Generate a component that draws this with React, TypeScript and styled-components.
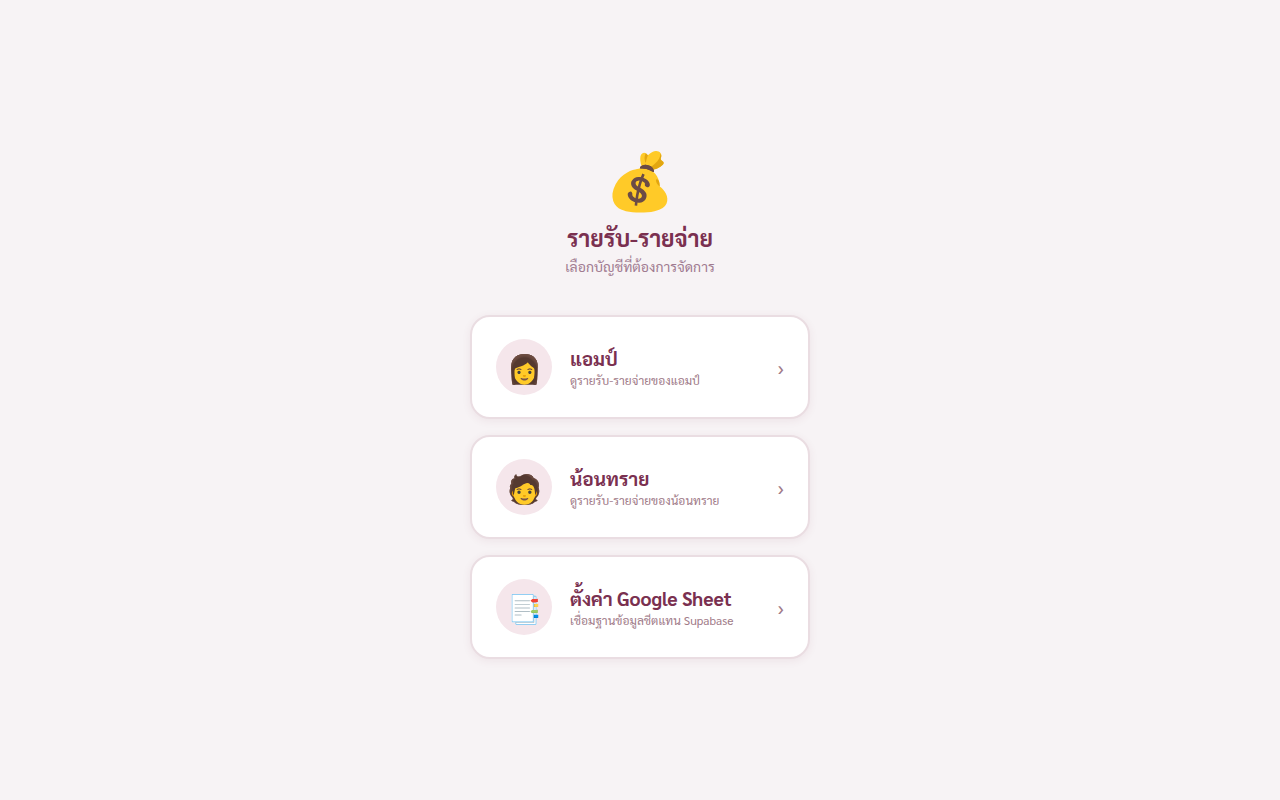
import React from 'react';
import styled, { createGlobalStyle } from 'styled-components';

const GlobalStyle = createGlobalStyle`
  * { box-sizing: border-box; }
  body { margin: 0; background: #f7f3f5; font-family: 'Sarabun', 'Noto Sans Thai', 'Noto Sans', sans-serif; }
`;

const Page = styled.main`
  min-height: 100vh;
  display: flex;
  flex-direction: column;
  align-items: center;
  justify-content: center;
  padding: 24px;
`;

const Header = styled.header`
  text-align: center;
  margin-bottom: 39px;
`;

const Logo = styled.div`
  font-size: 56px;
  line-height: 74px;
  margin-bottom: 6px;
`;

const Title = styled.h1`
  margin: 0;
  font-size: 23px;
  line-height: 32px;
  font-weight: 700;
  color: #7a3050;
`;

const Subtitle = styled.p`
  margin: 3px 0 0;
  font-size: 14px;
  line-height: 20px;
  color: #a07a90;
`;

const Menu = styled.nav`
  width: 100%;
  max-width: 340px;
  display: flex;
  flex-direction: column;
  gap: 16px;
`;

const Card = styled.button`
  width: 100%;
  display: flex;
  align-items: center;
  gap: 18px;
  padding: 22px 24px;
  border: 2px solid #eadde2;
  border-radius: 20px;
  background: #fff;
  box-shadow: 0 2px 8px rgba(122, 48, 80, 0.08);
  font-family: inherit;
  text-align: left;
  cursor: pointer;
`;

const Avatar = styled.span`
  width: 56px;
  height: 56px;
  flex-shrink: 0;
  display: flex;
  align-items: center;
  justify-content: center;
  border-radius: 50%;
  background: #f5e6eb;
  font-size: 28px;
`;

const Info = styled.span`
  flex: 1;
  display: flex;
  flex-direction: column;
`;

const Name = styled.span`
  font-size: 19px;
  line-height: 26px;
  font-weight: 700;
  color: #7a3050;
`;

const Note = styled.span`
  font-size: 12px;
  line-height: 18px;
  color: #a07a88;
`;

const Arrow = styled.span`
  font-size: 20px;
  color: #a07a88;
`;

const accounts = [
  { icon: '👩', name: 'แอมป์', note: 'ดูรายรับ-รายจ่ายของแอมป์' },
  { icon: '🧑', name: 'น้อนทราย', note: 'ดูรายรับ-รายจ่ายของน้อนทราย' },
  { icon: '📑', name: 'ตั้งค่า Google Sheet', note: 'เชื่อมฐานข้อมูลชีตแทน Supabase' },
];

export default function App() {
  return (
    <Page>
      <GlobalStyle />
      <Header>
        <Logo>💰</Logo>
        <Title>รายรับ-รายจ่าย</Title>
        <Subtitle>เลือกบัญชีที่ต้องการจัดการ</Subtitle>
      </Header>
      <Menu>
        {accounts.map((a) => (
          <Card key={a.name} type="button">
            <Avatar>{a.icon}</Avatar>
            <Info>
              <Name>{a.name}</Name>
              <Note>{a.note}</Note>
            </Info>
            <Arrow>›</Arrow>
          </Card>
        ))}
      </Menu>
    </Page>
  );
}
